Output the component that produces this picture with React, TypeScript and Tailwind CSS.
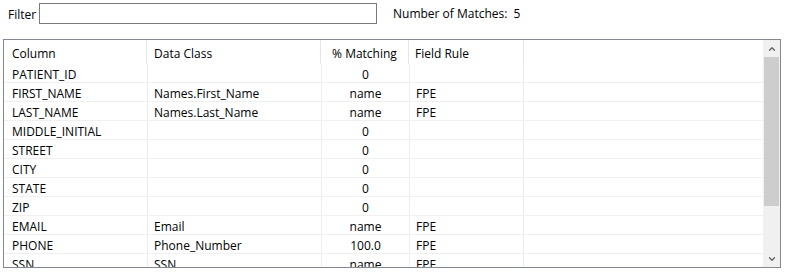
import { ChevronUp, ChevronDown } from 'lucide-react';

type Row = { col: string; cls: string; pct: string; rule: string };

const rows: Row[] = [
    { col: 'PATIENT_ID', cls: '', pct: '0', rule: '' },
    { col: 'FIRST_NAME', cls: 'Names.First_Name', pct: 'name', rule: 'FPE' },
    { col: 'LAST_NAME', cls: 'Names.Last_Name', pct: 'name', rule: 'FPE' },
    { col: 'MIDDLE_INITIAL', cls: '', pct: '0', rule: '' },
    { col: 'STREET', cls: '', pct: '0', rule: '' },
    { col: 'CITY', cls: '', pct: '0', rule: '' },
    { col: 'STATE', cls: '', pct: '0', rule: '' },
    { col: 'ZIP', cls: '', pct: '0', rule: '' },
    { col: 'EMAIL', cls: 'Email', pct: 'name', rule: 'FPE' },
    { col: 'PHONE', cls: 'Phone_Number', pct: '100.0', rule: 'FPE' },
    { col: 'SSN', cls: 'SSN', pct: 'name', rule: 'FPE' },
];

const App = () => {
    return (
        <div
            className="h-[276px] w-[785px] bg-white text-[12px] text-black"
            style={{ fontFamily: '"Open Sans", "Noto Sans", sans-serif' }}
        >
            <div className="flex h-[39px] items-start pt-[3px]">
                <span className="ml-[8px] mt-[4px] w-[31px] leading-[16px]">Filter</span>
                <input
                    type="text"
                    className="h-[21px] w-[338px] border border-[#7a7a7a] px-1 outline-none"
                />
                <span className="ml-[16px] mt-[3px] leading-[16px]">Number of Matches:</span>
                <span className="ml-[6px] mt-[3px] leading-[16px]">5</span>
            </div>

            <div className="ml-[3px] flex h-[229px] w-[778px] border border-[#828790]">
                <div className="flex-1 overflow-hidden">
                    <div className="flex h-[24px] items-center">
                        <div className="flex h-full w-[143px] items-center border-r border-[#e5e5e5] pl-[8px] pt-[4px]">
                            Column
                        </div>
                        <div className="flex h-full w-[174px] items-center border-r border-[#e5e5e5] pl-[7px] pt-[4px]">
                            Data Class
                        </div>
                        <div className="flex h-full w-[88px] items-center justify-center border-r border-[#e5e5e5] pt-[4px]">
                            % Matching
                        </div>
                        <div className="flex h-full w-[115px] items-center border-r border-[#e5e5e5] pl-[6px] pt-[4px]">
                            Field Rule
                        </div>
                    </div>
                    {rows.map((r) => (
                        <div
                            key={r.col}
                            className="flex h-[19px] items-center border-b border-[#f0f0f0]"
                        >
                            <div className="flex h-full w-[143px] items-center pl-[8px] pt-[4px]">
                                {r.col}
                            </div>
                            <div className="flex h-full w-[174px] items-center border-l border-[#e8eef6] pl-[6px] pt-[4px]">
                                {r.cls}
                            </div>
                            <div className="flex h-full w-[88px] items-center justify-center border-l border-[#e8eef6] pt-[4px]">
                                {r.pct}
                            </div>
                            <div className="flex h-full w-[115px] items-center border-x border-[#e8eef6] pl-[6px] pt-[4px]">
                                {r.rule}
                            </div>
                        </div>
                    ))}
                </div>
                <div className="flex w-[17px] flex-col bg-[#f0f0f0]">
                    <div className="flex h-[17px] items-center justify-center text-[#606060]">
                        <ChevronUp size={10} strokeWidth={3} />
                    </div>
                    <div className="mx-[1px] h-[149px] bg-[#cdcdcd]" />
                    <div className="flex-1" />
                    <div className="flex h-[17px] items-center justify-center text-[#606060]">
                        <ChevronDown size={10} strokeWidth={3} />
                    </div>
                </div>
            </div>
        </div>
    );
};

export default App;
